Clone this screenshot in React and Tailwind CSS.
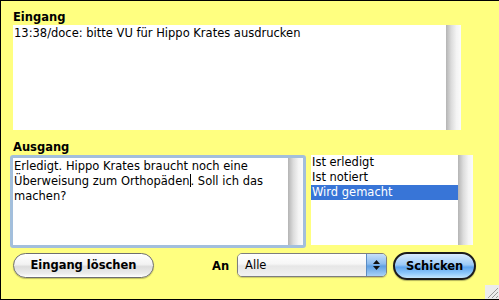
import React from "react";

function Scrollbar({ className = "" }) {
  return (
    <div
      className={
        "w-[15px] shrink-0 bg-[linear-gradient(to_right,#b4b4b4,#dcdcdc_35%,#f4f4f4_70%,#fbfbfb)] " +
        className
      }
    />
  );
}

export default function App() {
  return (
    <div
      className="relative w-[499px] h-[300px] overflow-hidden bg-[#ffff80] border-t border-l border-b border-black box-border text-black font-['DejaVu_Sans',sans-serif]"
    >
      {/* Eingang */}
      <div className="ml-[12px] mt-[9px] h-[14px] text-[11.5px] leading-[14px] font-bold">Eingang</div>
      <div className="ml-[12px] mt-[1px] flex h-[105px] w-[448px]">
        <div className="flex-1 bg-white pl-[1px] pt-[1px] text-[11.5px] leading-[15px]">
          13:38/doce: bitte VU für Hippo Krates ausdrucken
        </div>
        <Scrollbar />
      </div>

      {/* Ausgang */}
      <div className="ml-[12px] mt-[10px] h-[14px] text-[11.5px] leading-[14px] font-bold">Ausgang</div>
      <div className="mt-[1px] flex items-start">
        <div className="ml-[9px] h-[93px] w-[296px] rounded-[3px] border-[3px] border-[#a3bfdc] flex">
          <div className="flex-1 bg-white pl-[1px] pt-[1px] text-[11.5px] leading-[15px] whitespace-nowrap">
            Erledigt. Hippo Krates braucht noch eine
            <br />
            Überweisung zum Orthopäden
            <span className="inline-block w-px h-[13px] bg-black align-[-2px]" />
            . Soll ich das
            <br />
            machen?
          </div>
          <Scrollbar />
        </div>
        <div className="ml-[5px] flex h-[90px] w-[162px]">
          <div className="flex-1 bg-white text-[11.5px] leading-[15px]">
            <div className="h-[15px] pl-[1px]">Ist erledigt</div>
            <div className="h-[15px] pl-[1px]">Ist notiert</div>
            <div className="h-[15px] pl-[1px] bg-[#3875d7] text-white">Wird gemacht</div>
          </div>
          <Scrollbar />
        </div>
      </div>

      {/* Buttons row */}
      <div className="mt-[4px] flex items-start">
        <button
          className="ml-[12px] mt-[1px] h-[25px] w-[141px] rounded-full border border-[#6e6e6e] bg-[linear-gradient(to_bottom,#ffffff,#f2f2f2_45%,#dcdcdc_55%,#ececec_85%,#ffffff)] shadow-[0_1px_1px_rgba(0,0,0,0.25)] text-[11.5px] font-bold leading-[23px] text-black"
        >
          Eingang löschen
        </button>
        <div className="ml-[58px] mt-[7px] text-[11.5px] font-bold leading-[14px]">An</div>
        <div className="ml-[8px] mt-[1px] flex h-[24px] w-[150px] overflow-hidden rounded-[5px] border border-[#7e7e7e] shadow-[0_1px_1px_rgba(0,0,0,0.2)]">
          <div className="flex-1 bg-[linear-gradient(to_bottom,#ffffff,#f6f6f6_45%,#e6e6e6_55%,#f2f2f2)] pl-[7px] text-[11.5px] leading-[22px]">
            Alle
          </div>
          <div className="flex w-[20px] flex-col items-center justify-center gap-[2px] border-l border-[#5a8cc4] bg-[linear-gradient(to_bottom,#c6e0fa,#8cbcee_45%,#5f9fe2_55%,#a8d2f8)]">
            <svg width="7" height="4" viewBox="0 0 7 4"><path d="M3.5 0 L7 4 L0 4 Z" fill="#111" /></svg>
            <svg width="7" height="4" viewBox="0 0 7 4"><path d="M0 0 L7 0 L3.5 4 Z" fill="#111" /></svg>
          </div>
        </div>
        <button
          className="ml-[6px] h-[28px] w-[83px] rounded-full border-[2px] border-[#1c1c1c] bg-[linear-gradient(to_bottom,#d9ecff,#9ccaf6_45%,#5fa5ee_55%,#8ec8fb_80%,#c4e6ff)] shadow-[0_1px_1px_rgba(0,0,0,0.3)] text-[11.5px] font-bold leading-[24px] text-black"
        >
          Schicken
        </button>
      </div>

      {/* resize grip */}
      <div className="absolute right-0 bottom-0 h-[14px] w-[14px] bg-[#ececec]">
        <svg width="14" height="14" viewBox="0 0 14 14">
          <path d="M3 13 L13 3 M7 13 L13 7 M11 13 L13 11" stroke="#9a9a9a" strokeWidth="1" />
        </svg>
      </div>
    </div>
  );
}
